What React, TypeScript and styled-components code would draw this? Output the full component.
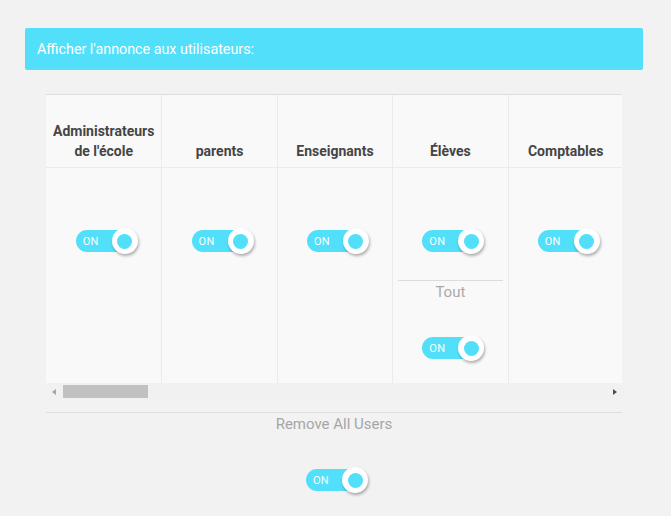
import React from "react";
import styled, { createGlobalStyle } from "styled-components";

const Global = createGlobalStyle`
  html, body { margin: 0; padding: 0; background: #f2f2f2; }
  body { font-family: Roboto, "Noto Sans", Arial, sans-serif; }
`;

const CYAN = "#52dff9";

const Page = styled.div`
  padding: 28px 28px 20px 25px;
`;

const Banner = styled.div`
  height: 42px;
  background: ${CYAN};
  border-radius: 2px;
  display: flex;
  align-items: center;
  padding-left: 12px;
  color: #fff;
  font-size: 14.3px;
`;

const Body = styled.div`
  padding: 24px 21px 0 21px;
`;

const Scroller = styled.div`
  overflow: hidden;
  width: 100%;
`;

const Grid = styled.div`
  width: 3673px;
  display: grid;
  grid-template-columns: repeat(5, 115.4px) 1fr;
  grid-template-rows: 73px auto;
  background: #f9f9f9;
  border-top: 1px solid #dedede;
`;

const HeadCell = styled.div<{ $first?: boolean }>`
  display: flex;
  align-items: flex-end;
  justify-content: center;
  text-align: center;
  padding: 0 4px 6px;
  font-weight: 700;
  font-size: 14px;
  line-height: 20px;
  color: #454545;
  border-left: ${(p) => (p.$first ? "none" : "1px solid #ebebeb")};
  border-bottom: 1px solid #ebebeb;
`;

const Cell = styled.div<{ $first?: boolean }>`
  display: flex;
  flex-direction: column;
  align-items: center;
  padding: 61px 5px 23px;
  border-left: ${(p) => (p.$first ? "none" : "1px solid #ebebeb")};
`;

const Divider = styled.div`
  align-self: stretch;
  height: 1px;
  background: #dcdcdc;
  margin-top: 27px;
`;

const SubLabel = styled.div`
  font-size: 15px;
  line-height: 20px;
  color: #a9a9a9;
  margin-top: 1px;
  margin-bottom: 34px;
`;

/* horizontal scrollbar (drawn) */
const ScrollBar = styled.div`
  height: 17px;
  background: #f1f1f1;
  display: flex;
  align-items: stretch;
`;

const ArrowButton = styled.div<{ $dir: "left" | "right" }>`
  width: 17px;
  flex: none;
  display: flex;
  align-items: center;
  justify-content: center;
  &::before {
    content: "";
    width: 0;
    height: 0;
    border-top: 3.5px solid transparent;
    border-bottom: 3.5px solid transparent;
    ${(p) =>
      p.$dir === "left"
        ? "border-right: 4px solid #a3a3a3; margin-left: -1px;"
        : "border-left: 4px solid #505050; margin-left: 2px;"}
  }
`;

const ScrollTrack = styled.div`
  flex: 1;
  display: flex;
  align-items: center;
`;

const Thumb = styled.div`
  width: 85px;
  height: 13px;
  background: #c1c1c1;
`;

const Track = styled.div`
  position: relative;
  width: 56px;
  height: 22px;
  border-radius: 11px;
  background: ${CYAN};
  margin: 1px 0;
  display: flex;
  align-items: center;
  box-sizing: border-box;
  padding-left: 7px;
  color: #fff;
  font-size: 11px;
  letter-spacing: 0.3px;
`;

const Knob = styled.div`
  position: absolute;
  left: 36px;
  top: -2px;
  width: 26px;
  height: 26px;
  border-radius: 50%;
  background: #fff;
  box-shadow: 1px 2px 3px rgba(0, 0, 0, 0.3);
  display: flex;
  align-items: center;
  justify-content: center;
  &::after {
    content: "";
    width: 15px;
    height: 15px;
    border-radius: 50%;
    background: ${CYAN};
  }
`;

const Footer = styled.div`
  border-top: 1px solid #dedede;
  margin-top: 12px;
  display: flex;
  flex-direction: column;
  align-items: center;
`;

const FooterLabel = styled.div`
  font-size: 15px;
  line-height: 20px;
  color: #a6a6a6;
  margin-top: 1px;
  margin-bottom: 34px;
`;

const Toggle = () => (
  <Track>
    ON
    <Knob />
  </Track>
);

const columns = [
  "Administrateurs de l'école",
  "parents",
  "Enseignants",
  "Élèves",
  "Comptables",
];

export default function App() {
  return (
    <>
      <Global />
      <Page>
        <Banner>Afficher l'annonce aux utilisateurs:</Banner>
        <Body>
          <Scroller>
            <Grid>
              {columns.map((c, i) => (
                <HeadCell key={c} $first={i === 0}>
                  {c}
                </HeadCell>
              ))}
              <HeadCell />
              {columns.map((c, i) => (
                <Cell key={c} $first={i === 0}>
                  <Toggle />
                  {c === "Élèves" && (
                    <>
                      <Divider />
                      <SubLabel>Tout</SubLabel>
                      <Toggle />
                    </>
                  )}
                </Cell>
              ))}
              <Cell />
            </Grid>
          </Scroller>
          <ScrollBar>
            <ArrowButton $dir="left" />
            <ScrollTrack>
              <Thumb />
            </ScrollTrack>
            <ArrowButton $dir="right" />
          </ScrollBar>
          <Footer>
            <FooterLabel>Remove All Users</FooterLabel>
            <Toggle />
          </Footer>
        </Body>
      </Page>
    </>
  );
}
